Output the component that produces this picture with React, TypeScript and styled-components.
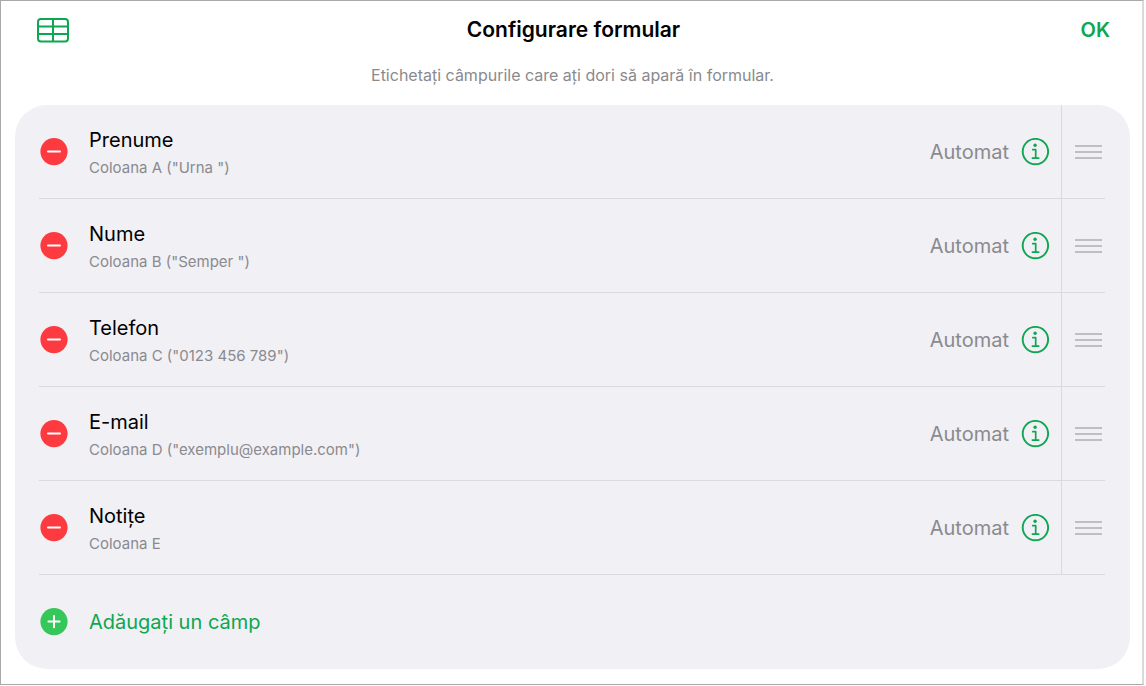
import React from "react";
import styled, { createGlobalStyle } from "styled-components";

const green = "#0ca750";

const GlobalStyle = createGlobalStyle`
  * { box-sizing: border-box; }
  body {
    margin: 0;
    background: #fff;
    color: #000;
    font-family: Inter, "Liberation Sans", sans-serif;
  }
  button {
    border: 0;
    padding: 0;
    background: none;
    font: inherit;
    color: inherit;
    cursor: pointer;
  }
  svg { display: block; }
`;

const Sheet = styled.main`
  margin-right: 2px;
  padding: 0 12px 15px 14px;
  border: 1px solid #a9a9a9;
  border-right: 2px solid #dadada;
  background: #fff;
`;

const Header = styled.header`
  display: grid;
  grid-template-columns: 1fr auto 1fr;
  align-items: center;
  height: 58px;
  padding: 0 20px 0 22px;
`;

const TableButton = styled.button`
  justify-self: start;
`;

const Title = styled.h1`
  margin: 0;
  font-size: 21px;
  line-height: 24px;
  font-weight: 600;
`;

const DoneButton = styled.button`
  justify-self: end;
  color: ${green};
  font-size: 20px;
  line-height: 24px;
  font-weight: 600;
`;

const Hint = styled.p`
  margin: 0;
  padding: 6px 0 20px;
  color: #8a8a8e;
  font-size: 16px;
  line-height: 20px;
  text-align: center;
`;

const Card = styled.section`
  padding: 0 25px 0 24px;
  border-radius: 32px;
  background: #f1f0f5;
`;

const FieldList = styled.ul`
  margin: 0;
  padding: 0;
  list-style: none;
`;

const FieldRow = styled.li`
  display: flex;
  align-items: stretch;
  height: 94px;
  border-bottom: 1px solid #dad9de;
`;

const FieldMain = styled.div`
  display: flex;
  flex: 1;
  align-items: center;
  gap: 12px;
  padding: 0 12px 0 1px;
`;

const FieldText = styled.div`
  flex: 1;
  padding: 5px 0 0 9px;
`;

const FieldName = styled.div`
  font-size: 20px;
  line-height: 28px;
`;

const FieldSource = styled.div`
  color: #8a8a8e;
  font-size: 15px;
  line-height: 28px;
`;

const Format = styled.span`
  color: #8a8a8e;
  font-size: 20px;
  line-height: 28px;
`;

const Handle = styled.button`
  display: flex;
  align-items: center;
  justify-content: flex-end;
  width: 44px;
  padding-right: 3px;
  border-left: 1px solid #dad9de;
  cursor: grab;
`;

const AddButton = styled.button`
  display: flex;
  align-items: center;
  gap: 21px;
  height: 94px;
  padding-left: 1px;
  color: ${green};
  font-size: 20px;
  line-height: 28px;
`;

const TableIcon = () => (
  <svg width="32" height="26" viewBox="0 0 32 26" fill="none" stroke={green} strokeWidth="2" aria-hidden="true">
    <rect x="1" y="2" width="30" height="22.6" rx="3" />
    <path d="M16 2V24.6M1 9.5H31M1 17H31" />
  </svg>
);

const CircleIcon = ({ color, plus }: { color: string; plus?: boolean }) => (
  <svg width="28" height="28" viewBox="0 0 28 28" aria-hidden="true">
    <circle cx="14" cy="13.6" r="13.6" fill={color} />
    <path
      d={plus ? "M8.4 13.6H19.6M14 8V19.2" : "M8 13.6H20"}
      stroke="#fff"
      strokeWidth="2"
      strokeLinecap="round"
    />
  </svg>
);

const InfoIcon = () => (
  <svg width="28" height="28" viewBox="0 0 28 28" fill="none" stroke={green} aria-hidden="true">
    <circle cx="14.4" cy="13.6" r="12.7" strokeWidth="1.9" />
    <circle cx="14.1" cy="7.3" r="1.7" fill={green} stroke="none" />
    <path d="M11.8 11.7H14.7V20M11.4 20.1H17.7" strokeWidth="1.7" strokeLinecap="round" strokeLinejoin="round" />
  </svg>
);

const HandleIcon = () => (
  <svg width="27" height="16" viewBox="0 0 27 16" stroke="#bfbfc3" strokeWidth="1.8" aria-hidden="true">
    <path d="M0 2H27M0 8H27M0 14H27" />
  </svg>
);

const fields = [
  { name: "Prenume", source: 'Coloana A ("Urna ")' },
  { name: "Nume", source: 'Coloana B ("Semper ")' },
  { name: "Telefon", source: 'Coloana C ("0123 456 789")' },
  { name: "E-mail", source: 'Coloana D ("exemplu@example.com")' },
  { name: "Notițe", source: "Coloana E" },
];

export default function App() {
  return (
    <>
      <GlobalStyle />
      <Sheet>
        <Header>
          <TableButton type="button" aria-label="Tabel">
            <TableIcon />
          </TableButton>
          <Title>Configurare formular</Title>
          <DoneButton type="button">OK</DoneButton>
        </Header>
        <Hint>Etichetați câmpurile care ați dori să apară în formular.</Hint>
        <Card>
          <FieldList>
            {fields.map((field) => (
              <FieldRow key={field.name}>
                <FieldMain>
                  <button type="button" aria-label={`Ștergeți ${field.name}`}>
                    <CircleIcon color="#fd3a3f" />
                  </button>
                  <FieldText>
                    <FieldName>{field.name}</FieldName>
                    <FieldSource>{field.source}</FieldSource>
                  </FieldText>
                  <Format>Automat</Format>
                  <button type="button" aria-label={`Format ${field.name}`}>
                    <InfoIcon />
                  </button>
                </FieldMain>
                <Handle type="button" aria-label={`Mutați ${field.name}`}>
                  <HandleIcon />
                </Handle>
              </FieldRow>
            ))}
          </FieldList>
          <AddButton type="button">
            <CircleIcon color="#35c759" plus />
            Adăugați un câmp
          </AddButton>
        </Card>
      </Sheet>
    </>
  );
}
